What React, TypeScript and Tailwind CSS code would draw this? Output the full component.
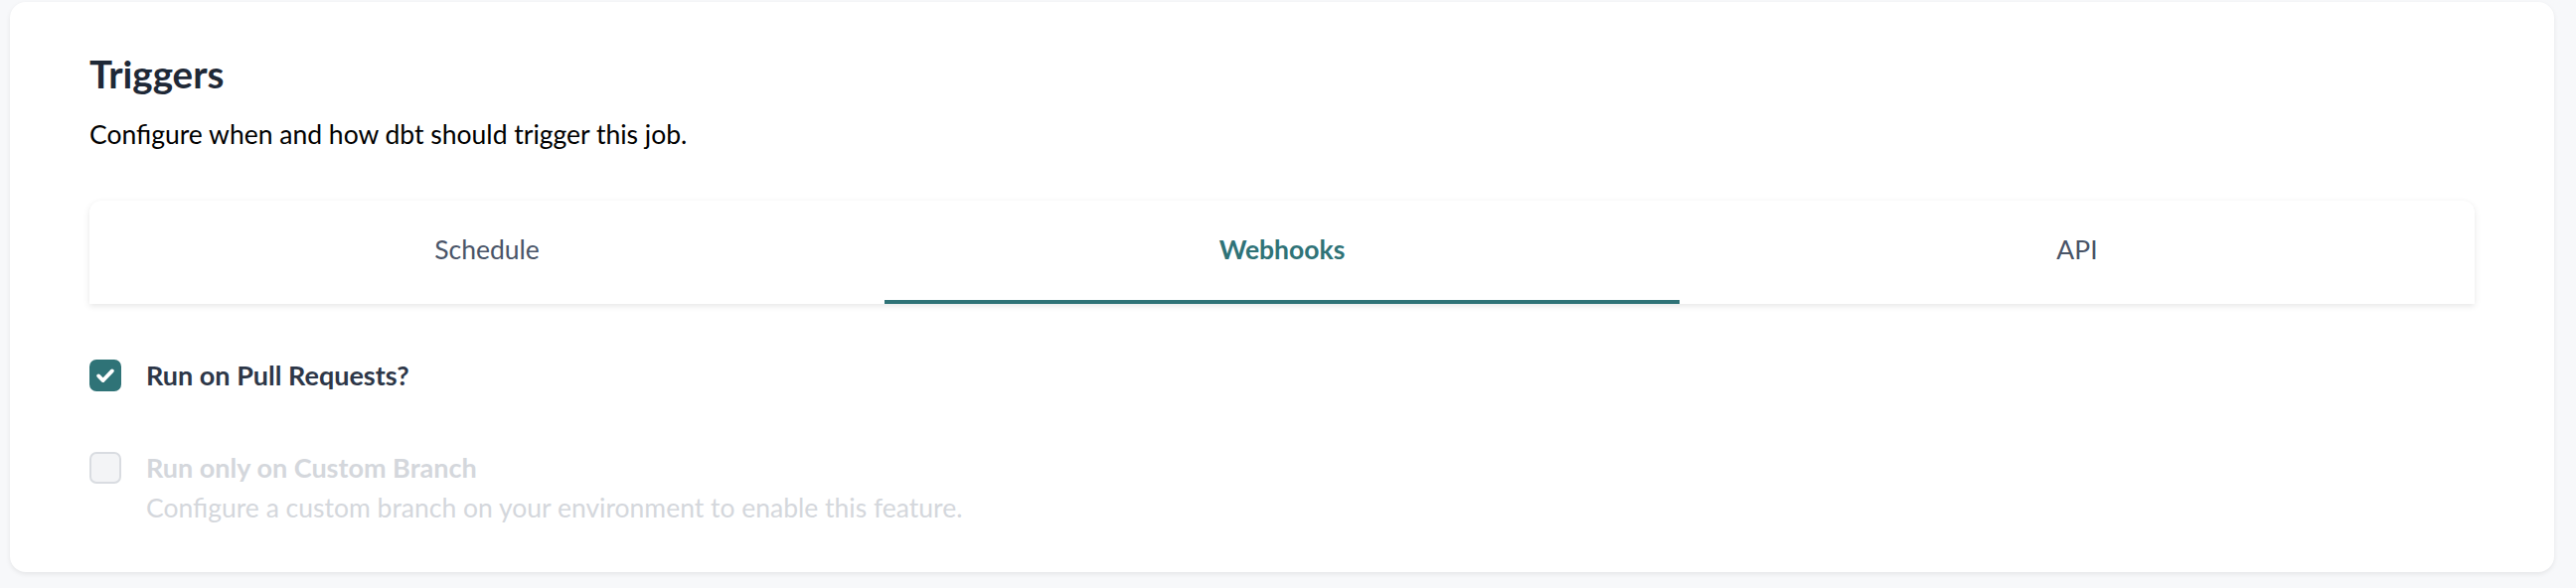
import { useState } from 'react';
import clsx from 'clsx';

const TABS = ['Schedule', 'Webhooks', 'API'] as const;
type Tab = (typeof TABS)[number];

function CheckIcon() {
  return (
    <svg className="h-[22px] w-[22px]" viewBox="0 0 24 24" fill="none" stroke="currentColor" strokeWidth={4.2}>
      <path strokeLinecap="round" strokeLinejoin="round" d="M4.5 12.5l5 5L19.5 7" />
    </svg>
  );
}

export default function App() {
  const [tab, setTab] = useState<Tab>('Webhooks');
  const [runOnPr, setRunOnPr] = useState(true);

  return (
    <div className="min-h-screen bg-[#f7f8fa] pl-[10px] pr-[22px] pt-[2px] font-['Lato',sans-serif]">
      <div className="rounded-[16px] bg-white px-[80px] pt-[50px] pb-[45px] shadow-[0_2px_5px_rgba(0,0,0,0.08)]">
        <h2 className="text-[38.5px] font-bold leading-[44px] text-[#1f2937]">Triggers</h2>
        <p className="mt-[21px] text-[26.5px] leading-[36px] text-black">
          Configure when and how dbt should trigger this job.
        </p>

        <div className="mt-[49px] flex h-[104px] rounded-t-[12px] bg-white shadow-[0_2px_6px_rgba(0,0,0,0.1)]">
          {TABS.map((t) => (
            <button
              key={t}
              onClick={() => setTab(t)}
              className={clsx(
                'flex flex-1 items-center justify-center border-b-4 text-[26.5px]',
                tab === t
                  ? 'border-[#2f7377] font-bold text-[#2f7377]'
                  : 'border-transparent text-[#4a5568]',
              )}
            >
              {t}
            </button>
          ))}
        </div>

        <div className="mt-[52px] flex items-center gap-[25px]">
          <button
            onClick={() => setRunOnPr((v) => !v)}
            className={clsx(
              'flex h-[32px] w-[32px] items-center justify-center rounded-[7px] text-white',
              runOnPr ? 'bg-[#2f7377]' : 'border-2 border-[#d1d5db] bg-white',
            )}
            aria-label="Run on Pull Requests?"
          >
            {runOnPr && <CheckIcon />}
          </button>
          <span className="text-[27px] font-bold leading-[40px] text-[#2d3748]">Run on Pull Requests?</span>
        </div>

        <div className="mt-[53px] flex items-start gap-[25px]">
          <div className="mt-[4px] h-[32px] w-[32px] rounded-[7px] border-2 border-[#d9dce1] bg-[#f3f4f6]" />
          <div>
            <div className="text-[27px] font-bold leading-[40px] text-[#d4d7dc]">Run only on Custom Branch</div>
            <div className="text-[26.5px] leading-[40px] text-[#d4d7dc]">
              Configure a custom branch on your environment to enable this feature.
            </div>
          </div>
        </div>
      </div>
    </div>
  );
}
